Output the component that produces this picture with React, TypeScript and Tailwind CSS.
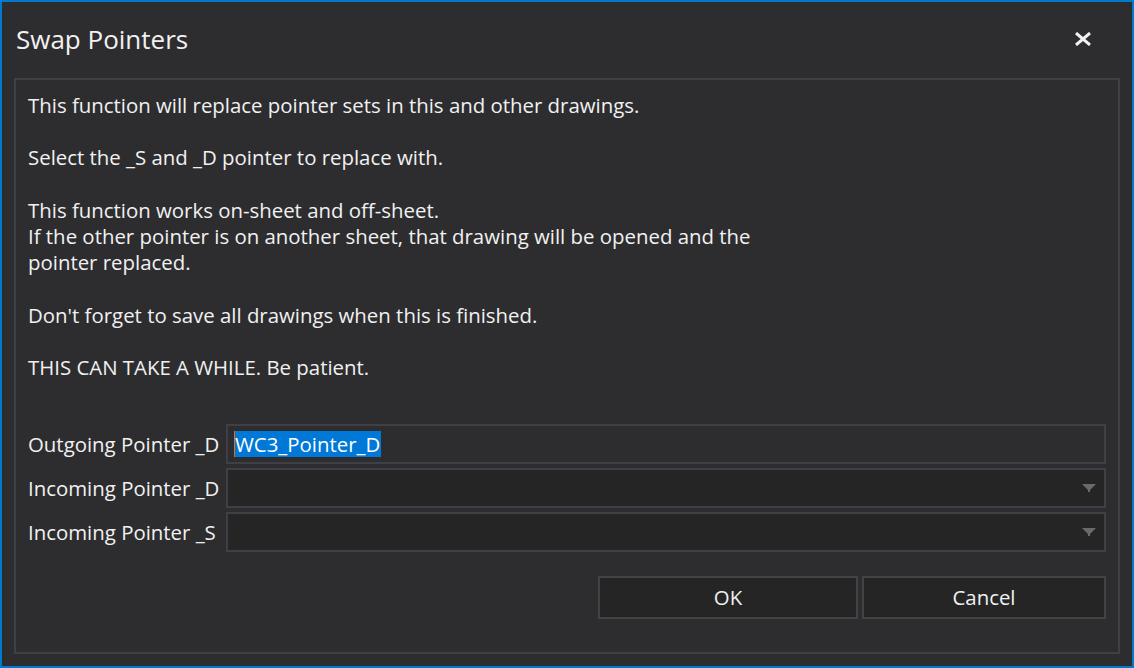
const lines: string[] = [
  "This function will replace pointer sets in this and other drawings.",
  "",
  "Select the _S and _D pointer to replace with.",
  "",
  "This function works on-sheet and off-sheet.",
  "If the other pointer is on another sheet, that drawing will be opened and the",
  "pointer replaced.",
  "",
  "Don't forget to save all drawings when this is finished.",
  "",
  "THIS CAN TAKE A WHILE. Be patient.",
];

function ComboArrow() {
  return (
    <svg width="14" height="8" viewBox="0 0 14 8" className="shrink-0">
      <path d="M0 0 H14 L8 6 V8 H6 V6 Z" fill="#6a6a6d" />
    </svg>
  );
}

function Combo() {
  return (
    <div className="h-[40px] flex items-center justify-end pr-[8px] border-2 border-[#3f3f46] bg-[#252526]">
      <ComboArrow />
    </div>
  );
}

export default function App() {
  return (
    <div
      className="w-[1134px] h-[668px] flex flex-col border-2 border-[#007acc] bg-[#2d2d30] text-[#f1f1f1]"
      style={{ fontFamily: '"Open Sans", "Noto Sans", sans-serif' }}
    >
      {/* title bar */}
      <div className="h-[76px] flex items-center justify-between pl-[14px] pr-[40px] pb-[2px]">
        <span className="text-[26px] leading-none">Swap Pointers</span>
        <svg width="18" height="14" viewBox="0 0 18 14">
          <path d="M2 1 L16 13 M16 1 L2 13" stroke="#f1f1f1" strokeWidth="3" />
        </svg>
      </div>

      {/* content panel */}
      <div className="flex-1 mx-[12px] mb-[12px] border-2 border-[#3f3f46] flex flex-col px-[12px] pt-[12px]">
        <div className="text-[20.4px] leading-[26.2px]">
          {lines.map((l, i) => (
            <div key={i} className="h-[26.2px] whitespace-pre">{l}</div>
          ))}
        </div>

        <div className="mt-[44px] grid grid-cols-[198px_1fr] gap-y-[4px] text-[20.4px]">
          <div className="flex items-center">Outgoing Pointer _D</div>
          <div className="h-[40px] flex items-center pl-[6px] border-2 border-[#3f3f46] bg-[#2d2d30]">
            <span className="w-px h-[26px] bg-[#e0701c]" />
            <span className="h-[26px] flex items-center bg-[#0078d7] text-white pr-[1px]">WC3_Pointer_D</span>
          </div>
          <div className="flex items-center">Incoming Pointer _D</div>
          <Combo />
          <div className="flex items-center">Incoming Pointer _S</div>
          <Combo />
        </div>

        <div className="mt-[24px] flex justify-end gap-[4px] text-[20.4px]">
          <button className="w-[260px] h-[43px] border-2 border-[#434346] bg-[#252526]">OK</button>
          <button className="w-[244px] h-[43px] border-2 border-[#434346] bg-[#252526]">Cancel</button>
        </div>
      </div>
    </div>
  );
}
